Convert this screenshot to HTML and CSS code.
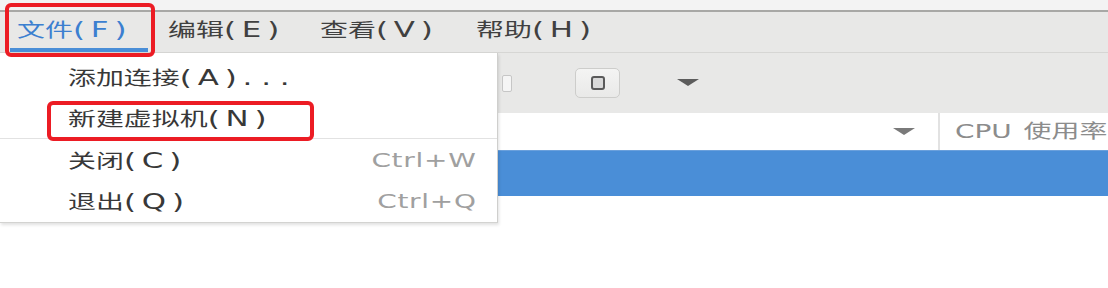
FILE: index.html
```html
<!DOCTYPE html>
<html lang="zh-CN">
<head>
  <meta charset="UTF-8">
  <title>虚拟系统管理器</title>
  <link rel="stylesheet" href="styles.css">
</head>
<body>

  <div class="window">
    <div class="titlebar"></div>

    <div class="menubar">
      <div class="menu-item active"><span class="sx">文件<span class="key">(F)</span></span></div>
      <div class="menu-item"><span class="sx">编辑<span class="key">(E)</span></span></div>
      <div class="menu-item"><span class="sx">查看<span class="key">(V)</span></span></div>
      <div class="menu-item"><span class="sx">帮助<span class="key">(H)</span></span></div>
    </div>

    <div class="toolbar">
      <div class="stub"></div>
      <button class="tool-btn">
        <svg width="16" height="16" viewBox="0 0 16 16">
          <rect x="2" y="2" width="12" height="12" rx="2" fill="#d9d9d9" stroke="#5a5a5a" stroke-width="2"/>
        </svg>
      </button>
      <svg class="tool-arrow" width="22" height="8" viewBox="0 0 22 8">
        <polygon points="0,0 22,0 11,7" fill="#5c5c5c"/>
      </svg>
    </div>

    <div class="list-header">
      <div class="col-name">
        <svg width="22" height="8" viewBox="0 0 22 8">
          <polygon points="0,0 22,0 11,7" fill="#7a7a7a"/>
        </svg>
      </div>
      <div class="col-cpu"><span class="sx">CPU 使用率</span></div>
    </div>

    <div class="list-row selected"></div>
    <div class="list-rest"></div>

    <!-- open "文件" menu -->
    <div class="popup">
      <div class="popup-item"><span class="sx">添加连接<span class="key">(A)</span><span class="dots">...</span></span></div>
      <div class="popup-item"><span class="sx">新建虚拟机<span class="key">(N)</span></span></div>
      <div class="popup-sep"></div>
      <div class="popup-item">
        <span class="sx">关闭<span class="key">(C)</span></span>
        <span class="sx shortcut">Ctrl+W</span>
      </div>
      <div class="popup-item">
        <span class="sx">退出<span class="key">(Q)</span></span>
        <span class="sx shortcut">Ctrl+Q</span>
      </div>
    </div>

    <!-- annotation boxes -->
    <div class="mark mark-file"></div>
    <div class="mark mark-new"></div>
  </div>

</body>
</html>
```

FILE: styles.css
```css
body {
  margin: 0;
  background: #fff;
  font-family: "DejaVu Sans", "Noto Sans CJK SC", sans-serif;
  font-size: 19px;
  color: #3a3a3a;
  overflow: hidden;
}

.window {
  position: relative;
  width: 1108px;
  height: 288px;
}

/* the screenshot is stretched sideways */
.sx {
  display: inline-block;
  white-space: nowrap;
  transform: scaleX(1.47);
  transform-origin: 0 50%;
}

.key {
  font-size: 21px;
  letter-spacing: 4px;
}

.dots {
  font-size: 21px;
  letter-spacing: 6px;
}

.titlebar {
  height: 10px;
  background: #f3f3f3;
  border-bottom: 2px solid #a8a8a6;
}

.menubar {
  display: flex;
  height: 40px;
  background: #e8e8e7;
  border-bottom: 1px solid #d6d6d4;
}

.menu-item {
  box-sizing: border-box;
  height: 40px;
  line-height: 36px;
  padding-left: 7px;
  width: 152px;
  color: #404040;
}

.menu-item.active {
  width: 138px;
  margin-left: 10px;
  margin-right: 13px;
  color: #3b7fd0;
  border-bottom: 4px solid #4a8ed7;
}

.menu-item:nth-child(3) {
  width: 156px;
}

.toolbar {
  display: flex;
  align-items: center;
  height: 60px;
  padding-left: 502px;
  background: #e8e8e7;
}

.stub {
  box-sizing: border-box;
  width: 10px;
  height: 17px;
  background: #f5f5f5;
  border: 1px solid #c6c6c6;
  border-radius: 2px;
}

.tool-btn {
  display: flex;
  align-items: center;
  justify-content: center;
  width: 45px;
  height: 30px;
  margin-left: 63px;
  padding: 0;
  background: linear-gradient(#f4f4f3, #e9e9e8);
  border: 1px solid #cdcdcb;
  border-radius: 5px;
}

.tool-arrow {
  margin-left: 57px;
}

.list-header {
  display: flex;
  height: 37px;
  background: #fff;
}

.col-name {
  box-sizing: border-box;
  flex: 0 0 940px;
  display: flex;
  align-items: center;
  justify-content: flex-end;
  padding-right: 23px;
  border-right: 2px solid #e2e2e2;
}

.col-cpu {
  flex: 1;
  padding-left: 15px;
  line-height: 37px;
  font-size: 19px;
  color: #8c8c8c;
  word-spacing: 2px;
  overflow: hidden;
}

.list-row.selected {
  height: 45px;
  background: #4a8ed7;
  border-top: 1px solid #6aa0dc;
}

.popup {
  position: absolute;
  left: 0;
  top: 53px;
  box-sizing: border-box;
  width: 498px;
  height: 170px;
  padding-top: 3px;
  background: #fff;
  border-right: 1px solid #cfcfcd;
  border-bottom: 1px solid #d3d3d1;
  box-shadow: 1px 2px 3px rgba(0, 0, 0, 0.12);
}

.popup-item {
  display: flex;
  align-items: center;
  justify-content: space-between;
  height: 41px;
  padding: 0 20px 0 68px;
  color: #383838;
}

.popup-sep {
  height: 1px;
  background: #e2e2e2;
}

.shortcut {
  transform-origin: 100% 50%;
  color: #a0a0a0;
  letter-spacing: 0.5px;
}

.mark {
  position: absolute;
  box-sizing: border-box;
  border: 4px solid #ec1c24;
  border-radius: 6px;
}

.mark-file {
  left: 5px;
  top: 3px;
  width: 150px;
  height: 54px;
}

.mark-new {
  left: 47px;
  top: 101px;
  width: 267px;
  height: 40px;
}
```
